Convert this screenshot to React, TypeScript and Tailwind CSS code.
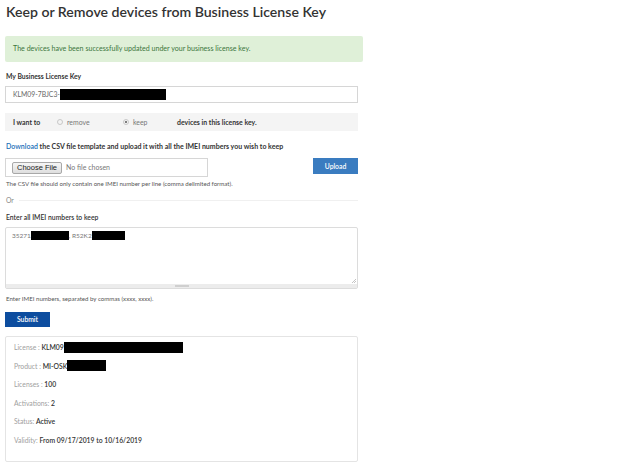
const font = { fontFamily: 'Lato, "Open Sans", sans-serif' }

function Radio({ checked, label }: { checked?: boolean; label: string }) {
  return (
    <span className="flex items-center gap-[4px]">
      <span className="w-[6px] h-[6px] rounded-full border border-[#c8c8c8] bg-[#f4f4f4] flex items-center justify-center">
        {checked && <span className="w-[2px] h-[2px] rounded-full bg-[#555]" />}
      </span>
      <span className="text-[#777]">{label}</span>
    </span>
  )
}

function InfoRow({ label, children }: { label: string; children: React.ReactNode }) {
  return (
    <div className="flex items-center h-[18.5px] text-[6.8px]">
      <span className="text-[#a0a0a0]">{label}</span>
      <span className="text-[#333] font-semibold flex items-center">{children}</span>
    </div>
  )
}

export default function App() {
  return (
    <div className="w-[624px] h-[465px] bg-white overflow-hidden text-[#333]" style={font}>
      <div className="w-[358px] pl-[5px]">
        <h1 className="pl-[1px] pt-[2px] text-[14.1px] leading-[20px] font-semibold text-[#333]">
          Keep or Remove devices from Business License Key
        </h1>

        <div className="mt-[14px] w-[358px] h-[26px] bg-[#dff0d8] rounded-[2px] flex items-center pl-[8px] text-[7.1px] text-[#3c763d]">
          The devices have been successfully updated under your business license key.
        </div>

        <div className="mt-[10px] pl-[1px] text-[6.8px] font-bold leading-[9px]">My Business License Key</div>
        <div className="mt-[5px] w-[353px] h-[17px] border border-[#d6d6d6] flex items-center pl-[7px] text-[6.8px] text-[#666]">
          KLM09-7BJC3-
          <span className="inline-block w-[106px] h-[11px] bg-black" />
        </div>

        <div className="mt-[10px] w-[353px] h-[18px] bg-[#f4f4f4] flex items-center pl-[8px] text-[6.9px]">
          <span className="font-bold w-[44px]">I want to</span>
          <span className="w-[66px]">
            <Radio label="remove" />
          </span>
          <span className="w-[54px]">
            <Radio checked label="keep" />
          </span>
          <span className="font-bold">devices in this license key.</span>
        </div>

        <div className="mt-[11px] pl-[1px] text-[7px] font-bold leading-[9px]">
          <span className="text-[#1a6fb8] font-semibold">Download</span> the CSV file template and upload it with all the IMEI numbers you wish to keep
        </div>

        <div className="mt-[7px] flex items-start justify-between w-[353px]">
          <div className="w-[203px] h-[19px] border border-[#d6d6d6] flex items-center pl-[6px] gap-[4px]">
            <span
              className="h-[12px] px-[4px] flex items-center border border-[#a8a8a8] rounded-[2px] bg-gradient-to-b from-[#f6f6f6] to-[#dedede] text-[7.5px] text-[#222]"
              style={{ fontFamily: '"Liberation Sans", Arial, sans-serif' }}
            >
              Choose File
            </span>
            <span className="text-[7px] text-[#777]">No file chosen</span>
          </div>
          <div className="w-[45px] h-[16px] bg-[#3a7cc0] text-white text-[6.8px] font-semibold flex items-center justify-center">
            Upload
          </div>
        </div>
        <div className="mt-[3px] pl-[1px] text-[6.1px] text-[#555] leading-[8px]">
          The CSV file should only contain one IMEI number per line (comma delimited format).
        </div>

        <div className="mt-[8px] flex items-center w-[353px] pl-[1px]">
          <span className="text-[6.8px] text-[#888] leading-[8px]">Or</span>
          <span className="ml-[5px] flex-1 h-px bg-[#f0f0f0]" />
        </div>

        <div className="mt-[9px] pl-[1px] text-[6.8px] font-semibold leading-[9px]">Enter all IMEI numbers to keep</div>
        <div className="mt-[5px] w-[353px] h-[62px] border border-[#dcdcdc] rounded-[2px] flex flex-col">
          <div className="flex-1 relative flex items-start pl-[6px] pt-[3px] text-[6.5px] text-[#777]">
            <span className="flex items-center">
              35271
              <span className="inline-block w-[38px] h-[9px] bg-black" />
              , R52K2
              <span className="inline-block w-[33px] h-[9px] bg-black" />
            </span>
            <svg className="absolute right-[1px] bottom-[1px]" width="5" height="5" viewBox="0 0 5 5">
              <path d="M5 1 L1 5 M5 3 L3 5" stroke="#aaa" strokeWidth="0.7" />
            </svg>
          </div>
          <div className="h-[4px] bg-[#ececec] flex justify-center">
            <span className="mt-[1px] w-[14px] h-[2px] bg-[#cfcfcf]" />
          </div>
        </div>
        <div className="mt-[6px] pl-[1px] text-[6.1px] text-[#555] leading-[8px]">
          Enter IMEI numbers, separated by commas (xxxx, xxxx).
        </div>

        <div className="mt-[9px] w-[45px] h-[15px] bg-[#0d4d9f] text-white text-[6.8px] font-semibold flex items-center justify-center">
          Submit
        </div>

        <div className="mt-[9px] w-[353px] h-[126px] border border-[#e4e4e4] rounded-[2px] pl-[8px] pt-[1px]">
          <InfoRow label="License :&nbsp;">
            KLM09
            <span className="inline-block w-[119px] h-[11px] bg-black" />
          </InfoRow>
          <InfoRow label="Product :&nbsp;">
            MI-OSK
            <span className="inline-block w-[39px] h-[11px] bg-black" />
          </InfoRow>
          <InfoRow label="Licenses :&nbsp;">100</InfoRow>
          <InfoRow label="Activations:&nbsp;">2</InfoRow>
          <InfoRow label="Status:&nbsp;">Active</InfoRow>
          <InfoRow label="Validity:&nbsp;">From 09/17/2019 to 10/16/2019</InfoRow>
        </div>
      </div>
    </div>
  )
}
